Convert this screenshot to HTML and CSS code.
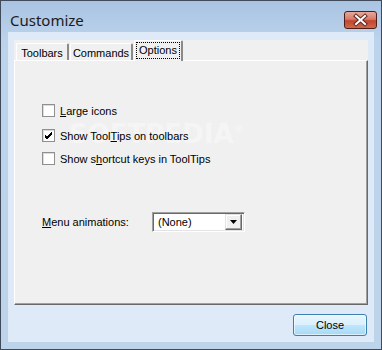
FILE: index.html
```html
<!DOCTYPE html>
<html>
<head>
  <link rel="stylesheet" href="styles.css">
</head>
<body>
  <div class="window">
    <div class="titlebar">
      <span class="title">Customize</span>
      <span class="close-x">
        <svg width="33" height="18" viewBox="0 0 33 18">
          <path d="M12 5 L21 13 M21 5 L12 13" stroke="#5a2a22" stroke-width="4" stroke-linecap="square"/>
          <path d="M12 5 L21 13 M21 5 L12 13" stroke="#ffffff" stroke-width="2" stroke-linecap="square"/>
        </svg>
      </span>
    </div>

    <div class="client">
      <div class="sheet">
        <div class="tabs">
          <div class="tab">Toolbars</div>
          <div class="tab">Commands</div>
          <div class="tab active"><span class="focus">Options</span></div>
        </div>

        <div class="page">
          <div class="watermark">SOFTPEDIA<sup>®</sup></div>

          <label class="opt">
            <span class="box"></span>
            <span><u>L</u>arge icons</span>
          </label>
          <label class="opt second">
            <span class="box">
              <svg width="11" height="11" viewBox="0 0 11 11">
                <path d="M2 5 L4 7 L9 2 M2 6 L4 8 L9 3 M2 7 L4 9 L9 4" stroke="#000" stroke-width="1" fill="none"/>
              </svg>
            </span>
            <span>Show Tool<u>T</u>ips on toolbars</span>
          </label>
          <label class="opt third">
            <span class="box"></span>
            <span>Show s<u>h</u>ortcut keys in ToolTips</span>
          </label>

          <div class="menu-row">
            <span class="menu-label"><u>M</u>enu animations:</span>
            <div class="combo">
              <span class="combo-value">(None)</span>
              <span class="combo-btn">
                <svg width="7" height="4" viewBox="0 0 7 4"><path d="M0 0 H7 L3.5 4 Z" fill="#000"/></svg>
              </span>
            </div>
          </div>
        </div>
      </div>

      <div class="footer">
        <button class="btn">Close</button>
      </div>
    </div>
  </div>
</body>
</html>
```

FILE: styles.css
```css
/* dialog window */
body {
  margin: 0;
  font-family: "Liberation Sans", Arial, sans-serif;
  font-size: 11px;
  color: #000;
}

.window {
  width: 382px;
  height: 350px;
  box-sizing: border-box;
  border: 1px solid #3f4b5a;
  padding: 0 7px 7px 7px;
  background: linear-gradient(#a9c3e1, #bcd3ec 40px, #bdd3ea);
  display: flex;
  flex-direction: column;
}

.titlebar {
  height: 31px;
  display: flex;
  align-items: flex-start;
  justify-content: space-between;
}

.title {
  font-family: "Noto Sans", "Open Sans", sans-serif;
  font-size: 15px;
  color: #1b1b1b;
  margin: 9px 0 0 2px;
}

.close-x {
  width: 33px;
  height: 18px;
  margin: 10px -3px 0 0;
  border: 1px solid #4d1d16;
  border-radius: 3px;
  box-sizing: border-box;
  background: linear-gradient(#e8a99a, #d8796a 45%, #c2432f 55%, #cf6a4c);
  display: flex;
  align-items: center;
  justify-content: center;
  overflow: hidden;
}

.close-x svg {
  flex: none;
  margin-top: -1px;
}

.client {
  flex: 1;
  background: #dfeaf8;
  padding: 8px 7px 6px 6px;
  display: flex;
  flex-direction: column;
}

.sheet {
  height: 265px;
  width: 354px;
  background: #f0f0f0;
  display: flex;
  flex-direction: column;
}

/* tabs */
.tabs {
  height: 20px;
  padding: 0 0 0 2px;
  display: flex;
  align-items: flex-end;
  position: relative;
  z-index: 1;
}

.tab {
  height: 17px;
  box-sizing: border-box;
  padding: 3px 0 0 0;
  text-align: center;
  border-left: 1px solid #fff;
  border-top: 1px solid #fff;
  border-right: 2px solid #8a8a8a;
  border-radius: 2px 2px 0 0;
  margin-right: 1px;
  background: #f0f0f0;
  white-space: nowrap;
}

.tab:first-child {
  width: 53px;
}

.tab:nth-child(2) {
  width: 63px;
}

.tab.active {
  height: 21px;
  width: 49px;
  margin-bottom: -1px;
  padding: 1px 1px 0 1px;
}

.focus {
  display: block;
  height: 17px;
  box-sizing: border-box;
  border: 1px dotted #000;
  padding: 1px 0 0 0;
}

/* page */
.page {
  flex: 1;
  position: relative;
  box-sizing: border-box;
  border-top: 1px solid #fff;
  border-left: 1px solid #fff;
  border-right: 1px solid #696969;
  border-bottom: 1px solid #696969;
  box-shadow: inset -1px -1px 0 #a0a0a0;
  padding: 43px 0 0 27px;
}

.opt {
  height: 13px;
  display: flex;
  align-items: center;
  gap: 5px;
  position: relative;
}

.opt.second {
  margin-top: 12px;
}

.opt.third {
  margin-top: 10px;
}

.box {
  width: 13px;
  height: 13px;
  box-sizing: border-box;
  border: 1px solid #8f8f8f;
  background: #fff;
  box-shadow: inset 1px 1px 0 #dcdcdc;
  display: flex;
  align-items: center;
  justify-content: center;
}

.menu-row {
  margin-top: 47px;
  display: flex;
  align-items: center;
}

.menu-label {
  width: 110px;
}

.combo {
  width: 93px;
  height: 20px;
  box-sizing: border-box;
  border-top: 1px solid #a0a0a0;
  border-left: 1px solid #a0a0a0;
  border-right: 1px solid #fff;
  border-bottom: 1px solid #fff;
  box-shadow: inset 1px 1px 0 #696969, inset -1px -1px 0 #e3e3e3;
  background: #fff;
  padding: 2px;
  display: flex;
  align-items: center;
}

.combo-value {
  flex: 1;
  padding-left: 3px;
}

.combo-btn {
  width: 17px;
  height: 16px;
  box-sizing: border-box;
  background: #f0f0f0;
  border-top: 1px solid #e3e3e3;
  border-left: 1px solid #e3e3e3;
  border-right: 1px solid #696969;
  border-bottom: 1px solid #696969;
  box-shadow: inset -1px -1px 0 #a0a0a0, inset 1px 1px 0 #fff;
  display: flex;
  align-items: center;
  justify-content: center;
}

.watermark {
  position: absolute;
  left: 54px;
  top: 58px;
  font-family: "DejaVu Sans", sans-serif;
  font-weight: bold;
  font-size: 26px;
  color: rgba(255, 255, 255, 0.4);
  pointer-events: none;
}

.watermark sup {
  font-size: 11px;
}

/* footer */
.footer {
  margin-top: 9px;
  display: flex;
  justify-content: flex-end;
}

.btn {
  width: 74px;
  height: 22px;
  font-family: "Liberation Sans", Arial, sans-serif;
  font-size: 11px;
  color: #000;
  border: 1px solid #3c7fb1;
  border-radius: 3px;
  background: linear-gradient(#eaf6fd, #d9f0fc 50%, #bee6fd 51%, #a7d9f5);
  box-shadow: inset 0 0 0 1px rgba(255, 255, 255, 0.6);
  padding: 0;
}
```
